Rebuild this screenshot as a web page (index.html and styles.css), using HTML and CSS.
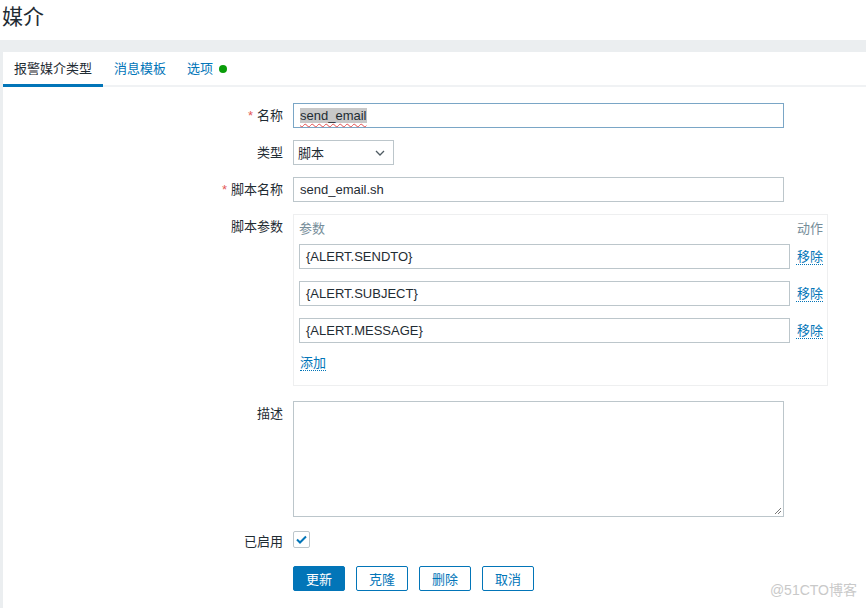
FILE: index.html
```html
<!DOCTYPE html>
<html lang="zh">
<head>
<meta charset="utf-8">
<title>媒介</title>
<link rel="stylesheet" href="styles.css">
</head>
<body>
<header class="page-head">
  <h1 class="page-title">媒介</h1>
</header>
<main class="panel">
  <nav class="tabs">
    <a class="tab tab-active">报警媒介类型</a>
    <a class="tab">消息模板</a>
    <a class="tab">选项<span class="dot"></span></a>
  </nav>
  <form class="form">
    <label class="lbl"><span class="req">*</span>名称</label>
    <div class="field"><div class="input input-wide input-focus"><span class="sel">send_email</span></div></div>

    <label class="lbl">类型</label>
    <div class="field">
      <div class="select">
        <span>脚本</span>
        <svg class="chev" width="10" height="6" viewBox="0 0 10 6"><path d="M1 1l4 4 4-4" fill="none" stroke="#4f5b62" stroke-width="1.3"/></svg>
      </div>
    </div>

    <label class="lbl"><span class="req">*</span>脚本名称</label>
    <div class="field"><div class="input input-wide">send_email.sh</div></div>

    <label class="lbl">脚本参数</label>
    <div class="field">
      <div class="params">
        <div class="prow phead"><span class="pcol">参数</span><span class="pact">动作</span></div>
        <div class="prow"><div class="input pinput">{ALERT.SENDTO}</div><a class="link pact">移除</a></div>
        <div class="prow"><div class="input pinput">{ALERT.SUBJECT}</div><a class="link pact">移除</a></div>
        <div class="prow"><div class="input pinput">{ALERT.MESSAGE}</div><a class="link pact">移除</a></div>
        <div class="padd"><a class="link">添加</a></div>
      </div>
    </div>

    <label class="lbl lbl-desc">描述</label>
    <div class="field field-desc">
      <div class="textarea">
        <svg class="grip" width="9" height="9" viewBox="0 0 9 9"><path d="M8 2L2 8M8 5L5 8" stroke="#777" stroke-width="1"/></svg>
      </div>
    </div>

    <label class="lbl lbl-check">已启用</label>
    <div class="field field-check">
      <span class="checkbox"><svg width="11" height="9" viewBox="0 0 11 9"><path d="M1 4.5l3 3 6-6" fill="none" stroke="#0275b8" stroke-width="2"/></svg></span>
    </div>

    <div></div>
    <div class="buttons">
      <button type="button" class="btn btn-primary">更新</button>
      <button type="button" class="btn">克隆</button>
      <button type="button" class="btn">删除</button>
      <button type="button" class="btn">取消</button>
    </div>
  </form>
  <div class="watermark">@51CTO博客</div>
</main>
</body>
</html>
```

FILE: styles.css
```css
* { box-sizing: border-box; }
html, body { margin: 0; padding: 0; }
body {
  background: #ebeef0;
  font-family: "Liberation Sans", "Noto Sans CJK SC", sans-serif;
  font-size: 13px;
  color: #1f2c33;
  width: 866px;
  height: 608px;
  overflow: hidden;
}
.page-head {
  background: #fff;
  height: 40px;
  padding: 2px 0 0 2px;
}
.page-title {
  margin: 0;
  font-size: 21px;
  font-weight: normal;
  line-height: 30px;
  color: #1f2c33;
}
.panel {
  background: #fff;
  margin: 12px 0 0 3px;
  height: 556px;
  position: relative;
}
.tabs {
  display: flex;
  height: 35px;
  border-bottom: 2px solid #f0f2f4;
}
.tab {
  padding: 0 10px 0 11px;
  line-height: 33px;
  color: #0275b8;
  display: flex;
  align-items: center;
}
.tab-active {
  color: #1f2c33;
  border-bottom: 3px solid #0275b8;
  height: 35px;
  width: 100px;
  margin-bottom: -2px;
}
.dot {
  width: 8px;
  height: 8px;
  border-radius: 50%;
  background: #0a9d0a;
  margin-left: 6px;
}
.form {
  display: grid;
  grid-template-columns: 280px 1fr;
  column-gap: 10px;
  row-gap: 12px;
  padding-top: 16px;
}
.lbl {
  text-align: right;
  line-height: 25px;
  color: #1f2c33;
}
.req { color: #e45959; margin-right: 4px; }
.input {
  height: 25px;
  border: 1px solid #bcc6cb;
  padding: 0 6px;
  line-height: 23px;
  color: #1f2c33;
  background: #fff;
  white-space: nowrap;
}
.input-wide { width: 491px; }
.input-focus { border-color: #7aa6c6; }
.sel {
  background: #c8c8c8;
  text-decoration: underline wavy #e35050 1px;
  text-underline-offset: 3px;
}
.select {
  width: 101px;
  height: 25px;
  border: 1px solid #bcc6cb;
  padding: 0 8px 0 4px;
  display: flex;
  align-items: center;
  justify-content: space-between;
}
.params {
  width: 535px;
  height: 172px;
  border: 1px solid #eeeff0;
  padding: 4px 4px 0 5px;
}
.prow {
  display: flex;
  align-items: center;
  column-gap: 6px;
  margin-bottom: 12px;
}
.phead { margin-bottom: 8px; height: 17px; }
.pcol { flex: 1; color: #768d99; }
.pact { width: 27px; text-align: right; color: #768d99; white-space: nowrap; }
.pinput { width: 491px; }
.link {
  color: #0275b8;
  border-bottom: 1px dotted #0275b8;
  line-height: 15px;
}
a.pact { color: #0275b8; }
.padd { margin-top: 0; padding-left: 1px; }
.field-desc { margin-top: 3px; }
.lbl-desc { margin-top: 3px; }
.textarea {
  width: 491px;
  height: 116px;
  border: 1px solid #bcc6cb;
  position: relative;
}
.grip { position: absolute; right: 1px; bottom: 1px; }
.field-check { display: flex; align-items: flex-start; }
.checkbox {
  width: 17px;
  height: 17px;
  border: 1px solid #bcc6cb;
  border-radius: 2px;
  display: flex;
  align-items: center;
  justify-content: center;
  margin-top: 2px;
}
.buttons {
  display: flex;
  column-gap: 11px;
}
.btn {
  width: 52px;
  height: 25px;
  border: 1px solid #0275b8;
  border-radius: 2px;
  background: #fff;
  color: #0275b8;
  font: inherit;
  font-size: 13px;
  padding: 0;
}
.btn-primary { background: #0275b8; color: #fff; }
.watermark {
  position: absolute;
  right: 9px;
  bottom: 9px;
  font-size: 14px;
  color: #c9c9c9;
}
```
